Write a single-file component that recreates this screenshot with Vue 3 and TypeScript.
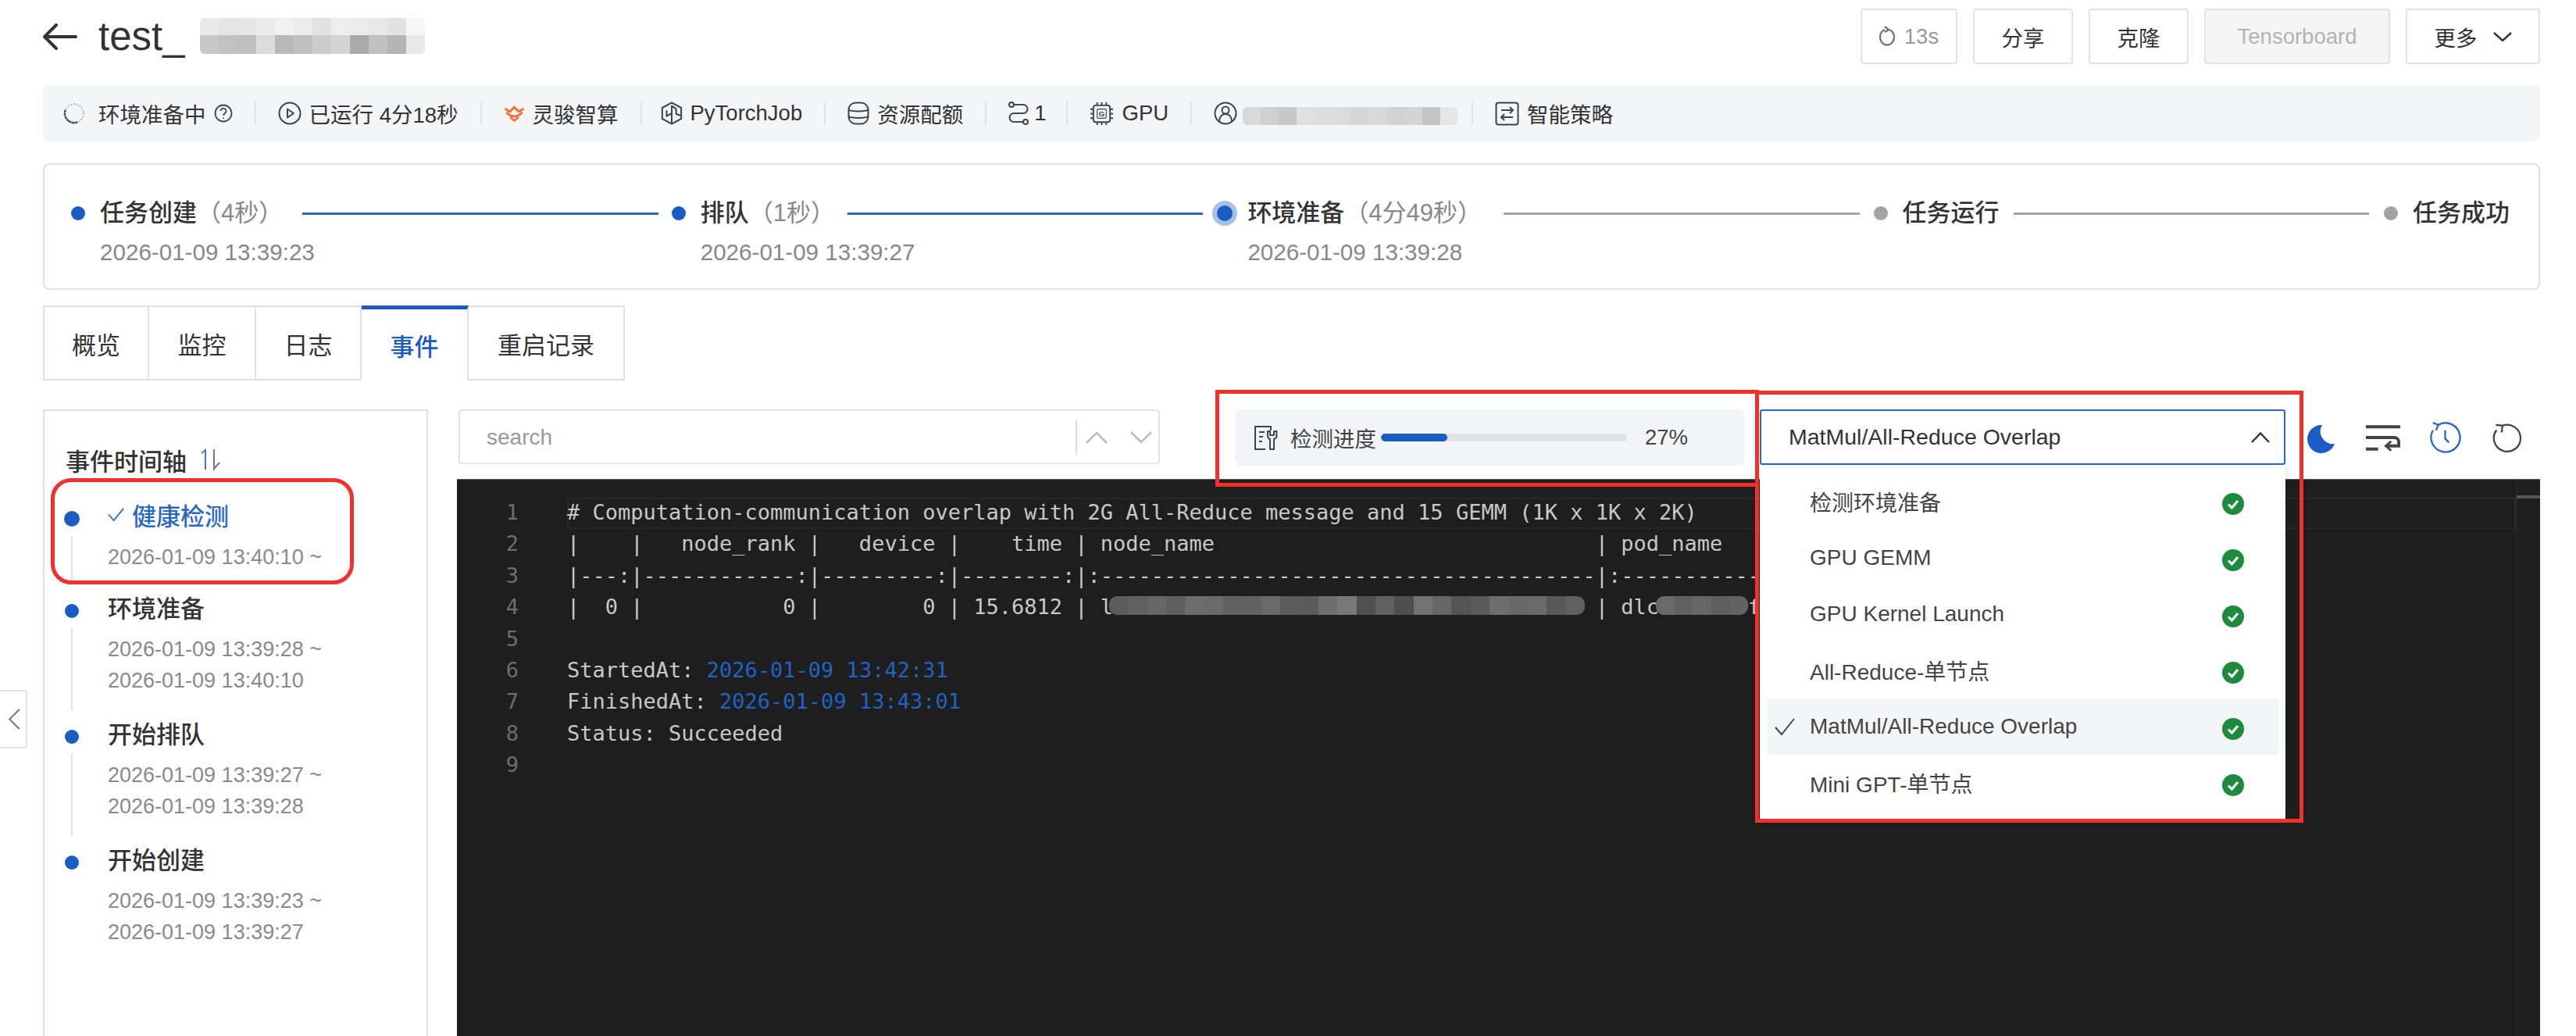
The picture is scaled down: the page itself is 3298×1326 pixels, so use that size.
<script setup lang="ts">
const shade = (v: string) => `#${v}${v}${v}`

const nameBlur = ['e9', 'e4', 'e6', 'eb', 'f0', 'ec', 'e2', 'ee', 'ec', 'e8', 'e2', 'f6', 'c8', 'c2', 'bf', 'dc', 'b9', 'c0', 'cc', 'd4', 'aa', 'c0', 'b4', 'e8'].map(shade)
const ownerBlur = ['d8', 'cf', 'c8', 'e0', 'dd', 'dc', 'd6', 'd8', 'd2', 'd4', 'c4', 'e6'].map(shade)
const nodeBlur = ['5c', '60', '66', '5e', '6c', '6a', '60', '62', '6a', '5c', '5a', '6e', '78', '50', '60', '4e', '72', '66', '54', '5a', '6e', '68', '6a', '58', '60'].map(shade)
const podBlur = ['6a', '60', '66', '5e', '62'].map(shade)

const tabs = [
  { label: '概览', width: 136 },
  { label: '监控', width: 137 },
  { label: '日志', width: 135 },
  { label: '事件', width: 137, active: true },
  { label: '重启记录', width: 200 },
]

const events = [
  { title: '健康检测', dates: ['2026-01-09 13:40:10 ~'], active: true },
  { title: '环境准备', dates: ['2026-01-09 13:39:28 ~', '2026-01-09 13:40:10'] },
  { title: '开始排队', dates: ['2026-01-09 13:39:27 ~', '2026-01-09 13:39:28'] },
  { title: '开始创建', dates: ['2026-01-09 13:39:23 ~', '2026-01-09 13:39:27'] },
]

const options = ['检测环境准备', 'GPU GEMM', 'GPU Kernel Launch', 'All-Reduce-单节点', 'MatMul/All-Reduce Overlap', 'Mini GPT-单节点']

const dash = (n: number) => '-'.repeat(n)
const plainLines = [
  '# Computation-communication overlap with 2G All-Reduce message and 15 GEMM (1K x 1K x 2K)',
  '|    |   node_rank |   device |    time | ' + 'node_name'.padEnd(39) + '| pod_name',
  `|---:|${dash(12)}:|${dash(9)}:|${dash(8)}:|:${dash(39)}|:${dash(11)}`,
  '|  0 |           0 |        0 | 15.6812 | ' + 'l'.padEnd(39) + '| dlc       f',
]
</script>

<template>
  <div class="page">
    <header class="top">
      <svg class="back" viewBox="0 0 44 34" fill="none" stroke="#333" stroke-width="4" stroke-linecap="round" stroke-linejoin="round"><path d="M2 17H42M17 2 2 17l15 15" /></svg>
      <h1 class="job">test_</h1>
      <div class="mosaic name-blur"><i v-for="(c, i) in nameBlur" :key="i" :style="{ background: c }"></i></div>
      <div class="actions">
        <button class="btn muted">
          <svg viewBox="0 0 20 28" width="20" height="28" fill="none" stroke="#777" stroke-width="2.400"><path d="M13 5a9 10 0 1 1-6 0M7 1l5 4-5 3" /></svg>
          13s
        </button>
        <button class="btn w128">分享</button>
        <button class="btn w128">克隆</button>
        <button class="btn disabled">Tensorboard</button>
        <button class="btn more">更多
          <svg viewBox="0 0 24 12" width="24" height="12" fill="none" stroke="#333" stroke-width="2.400"><path d="M1 1l11 10L23 1" /></svg>
        </button>
      </div>
    </header>

    <div class="meta">
      <span class="mi">
        <svg viewBox="0 0 28 30" width="28" height="30" fill="none" stroke-linecap="round"><circle cx="14" cy="15" r="12" stroke="#a9abae" stroke-width="1.800" stroke-dasharray="0.500 3.500" /><path d="M2.500 11.500A12 12 0 0 0 19 26" stroke="#555" stroke-width="2.600" stroke-dasharray="1.500 2.500" /></svg>
        <span class="t8">环境准备中</span>
        <svg viewBox="0 0 24 28" width="24" height="28" fill="none" stroke="#444" stroke-width="1.800"><circle cx="12" cy="14" r="10.500" /><path d="M8.500 11a3.500 3.500 0 1 1 5.500 3c-1.300.9-2 1.500-2 3M12 19.500v1.500" /></svg>
      </span>
      <i class="sep"></i>
      <span class="mi">
        <svg viewBox="0 0 30 30" width="30" height="30" fill="none" stroke="#444" stroke-width="2"><circle cx="15" cy="15" r="13.500" /><path d="M12 9.500 20 15l-8 5.500z" stroke-linejoin="round" /></svg>
        <span>已运行 4分18秒</span>
      </span>
      <i class="sep"></i>
      <span class="mi">
        <svg viewBox="0 0 27 22" width="27" height="22" fill="none" stroke="#f0703a" stroke-width="2.800" stroke-linejoin="round"><path d="M1.500 5 8 9l5.500-6L19 9l6.500-4" /><path d="M3.500 9.500Q6 14 13.500 15 21 14 23.500 9.500" /><path d="M8 16l5.500 4.500L19 16" /></svg>
        <span>灵骏智算</span>
      </span>
      <i class="sep"></i>
      <span class="mi torch">
        <svg viewBox="0 0 30 32" width="28" height="30" fill="none" stroke="#444" stroke-width="2.200" stroke-linejoin="round"><path d="M15 1.500 28 8.500v15L15 30.500 2 23.500v-15zM15 16V6l6 4v7l6 2M15 16l-7 4V12M15 16v14" /></svg>
        <span>PyTorchJob</span>
      </span>
      <i class="sep"></i>
      <span class="mi">
        <svg viewBox="0 0 28 30" width="28" height="30" fill="none" stroke="#444" stroke-width="2"><rect x="1.500" y="1.500" width="25" height="27" rx="9" /><path d="M1.500 10.500c3 2.500 22 2.500 25 0M1.500 19c3 2.500 22 2.500 25 0" /></svg>
        <span>资源配额</span>
      </span>
      <i class="sep"></i>
      <span class="mi tight">
        <svg viewBox="0 0 30 30" width="30" height="30" fill="none" stroke="#444" stroke-width="2"><path d="M9 4h12a5 5 0 0 1 0 11H9a5 5 0 0 0 0 11h12" /><circle cx="6" cy="4" r="3" fill="#f4f5f7" /><circle cx="24" cy="26" r="3" fill="#f4f5f7" /></svg>
        <span>1</span>
      </span>
      <i class="sep"></i>
      <span class="mi chip">
        <svg viewBox="0 0 32 32" width="31" height="31" fill="none" stroke="#444" stroke-width="2"><rect x="5" y="5" width="22" height="22" rx="3" /><rect x="10" y="10" width="12" height="12" rx="1.500" stroke-width="1.200" /><text x="16" y="19.500" text-anchor="middle" font-size="10" font-weight="700" fill="#444" stroke="none" font-family="Liberation Sans">G</text><path d="M10 1v4M16 1v4M22 1v4M10 27v4M16 27v4M22 27v4M1 10h4M1 16h4M1 22h4M27 10h4M27 16h4M27 22h4" /></svg>
        <span>GPU</span>
      </span>
      <i class="sep"></i>
      <span class="mi owner">
        <svg viewBox="0 0 30 30" width="30" height="30" fill="none" stroke="#444" stroke-width="2"><circle cx="15" cy="15" r="13.500" /><circle cx="15" cy="11" r="4.500" /><path d="M7 25c0-5 3-9 8-9s8 4 8 9" /></svg>
        <div class="mosaic owner-blur"><i v-for="(c, i) in ownerBlur" :key="i" :style="{ background: c }"></i></div>
      </span>
      <i class="sep"></i>
      <span class="mi">
        <svg viewBox="0 0 31 31" width="31" height="31" fill="none" stroke="#444" stroke-width="2"><rect x="1.500" y="1.500" width="28" height="28" rx="3" /><path d="M8 11h15M19 7l4 4-4 4M23 20H8M12 16l-4 4 4 4" /></svg>
        <span>智能策略</span>
      </span>
    </div>

    <section class="steps">
      <div class="step done">
        <i class="dot"></i>
        <div class="step-text">
          <div class="step-title">任务创建<span>（4秒）</span></div>
          <div class="step-date">2026-01-09 13:39:23</div>
        </div>
      </div>
      <i class="line blue l1"></i>
      <div class="step done">
        <i class="dot"></i>
        <div class="step-text">
          <div class="step-title">排队<span>（1秒）</span></div>
          <div class="step-date">2026-01-09 13:39:27</div>
        </div>
      </div>
      <i class="line blue l2"></i>
      <div class="step current">
        <i class="dot"></i>
        <div class="step-text">
          <div class="step-title">环境准备<span>（4分49秒）</span></div>
          <div class="step-date">2026-01-09 13:39:28</div>
        </div>
      </div>
      <i class="line l3"></i>
      <div class="step todo">
        <i class="dot"></i>
        <div class="step-text"><div class="step-title">任务运行</div></div>
      </div>
      <i class="line l4"></i>
      <div class="step todo">
        <i class="dot"></i>
        <div class="step-text"><div class="step-title">任务成功</div></div>
      </div>
    </section>

    <nav class="tabs">
      <div v-for="t in tabs" :key="t.label" class="tab" :class="{ active: t.active }" :style="{ width: t.width + 'px' }">{{ t.label }}</div>
    </nav>

    <div class="body">
      <aside class="timeline">
        <div class="tl-head">事件时间轴
          <svg viewBox="0 0 30 30" width="30" height="30" fill="none" stroke-width="2"><path d="M3 7l5-4v25" stroke="#3f78d4" /><path d="M19 2v25l7-8" stroke="#777" /></svg>
        </div>
        <div v-for="(ev, i) in events" :key="ev.title" class="ev" :class="{ first: i === 0 }">
          <div class="ev-rail">
            <i class="ev-dot"></i>
            <i v-if="i < events.length - 1" class="ev-line"></i>
          </div>
          <div class="ev-main">
            <div class="ev-title" :class="{ on: ev.active }">
              <svg v-if="ev.active" viewBox="0 0 22 20" width="21" height="19" fill="none" stroke="#2a68c8" stroke-width="1.800"><path d="M1 10l7 8L21 2" /></svg>
              {{ ev.title }}
            </div>
            <div class="ev-dates"><div v-for="d in ev.dates" :key="d">{{ d }}</div></div>
          </div>
        </div>
      </aside>

      <main class="logs">
        <div class="toolbar">
          <div class="search">
            <span class="ph">search</span>
            <i class="search-sep"></i>
            <svg viewBox="0 0 28 16" width="28" height="16" fill="none" stroke="#bbb" stroke-width="2.500"><path d="M1 15 14 2l13 13" /></svg>
            <svg viewBox="0 0 28 16" width="28" height="16" fill="none" stroke="#bbb" stroke-width="2.500"><path d="M1 1l13 13L27 1" /></svg>
          </div>
          <div class="progress">
            <svg viewBox="0 0 31 33" width="31" height="33" fill="none" stroke="#444" stroke-width="2"><path d="M15 31H2V2h20v5M7 9h7M7 15h5M7 21h4" /><path d="M18 8v6c0 2.500 1.500 3.500 3 4v13h5V18c1.500-.5 3.500-1.500 3.500-4V8l-3.500 0v5h-5V8z" stroke-linejoin="round" /></svg>
            <span class="p-label">检测进度</span>
            <div class="bar"><div class="fill" :style="{ width: '27%' }"></div></div>
            <span class="p-num">27%</span>
          </div>
          <div class="select">
            <span>MatMul/All-Reduce Overlap</span>
            <svg viewBox="0 0 24 14" width="24" height="14" fill="none" stroke="#333" stroke-width="2.400"><path d="M1 13 12 1.500 23 13" /></svg>
            <div class="drop">
              <div v-for="o in options" :key="o" class="opt" :class="{ sel: o === 'MatMul/All-Reduce Overlap' }">
                <svg v-if="o === 'MatMul/All-Reduce Overlap'" class="tick" viewBox="0 0 26 24" width="26" height="24" fill="none" stroke="#444" stroke-width="2"><path d="M1 13l8 9L25 2" /></svg>
                <span>{{ o }}</span>
                <svg class="ok" viewBox="0 0 28 28" width="28" height="28"><circle cx="14" cy="14" r="14" fill="#1e8a3e" /><path d="M8 14.500l4.500 4.500L20 10" fill="none" stroke="#fff" stroke-width="3" /></svg>
              </div>
            </div>
          </div>
          <div class="tools">
            <svg viewBox="0 0 36 36" width="36" height="36"><path d="M20 0A18 18 0 1 0 36 24 16 16 0 0 1 20 0z" fill="#1a5cc4" /></svg>
            <svg viewBox="0 0 46 36" width="45" height="36" fill="none" stroke="#444" stroke-width="4"><path d="M0 3h45M0 17h37a6 6 0 0 1 6 6v5H28M0 32h16" /><path d="M33 22l-7 6 7 6" stroke-width="3" /></svg>
            <svg viewBox="0 0 44 42" width="43" height="41" fill="none" stroke="#2a68c8" stroke-width="2.400"><path d="M13 5a19 19 0 1 1-7 7" /><path d="M6 2l7 3-3 7M22 12v11l5 5" /></svg>
            <svg viewBox="0 0 40 40" width="39" height="38" fill="none" stroke="#444" stroke-width="2.400"><path d="M13 4a18 18 0 1 1-8 6" /><path d="M4 3l9 1-1 9" /></svg>
          </div>
        </div>

        <div class="editor">
          <div class="cur-line"></div>
          <i class="ruler"></i>
          <i class="ruler-mark"></i>
          <div v-for="(l, i) in plainLines" :key="i" class="row">
            <span class="ln">{{ i + 1 }}</span><span class="code">{{ l }}</span>
            <template v-if="i === 3">
              <div class="mosaic node-blur"><i v-for="(c, j) in nodeBlur" :key="j" :style="{ background: c }"></i></div>
              <div class="mosaic pod-blur"><i v-for="(c, j) in podBlur" :key="j" :style="{ background: c }"></i></div>
            </template>
          </div>
          <div class="row"><span class="ln">5</span><span class="code"></span></div>
          <div class="row"><span class="ln">6</span><span class="code">StartedAt: <b>2026-01-09 13:42:31</b></span></div>
          <div class="row"><span class="ln">7</span><span class="code">FinishedAt: <b>2026-01-09 13:43:01</b></span></div>
          <div class="row"><span class="ln">8</span><span class="code">Status: Succeeded</span></div>
          <div class="row"><span class="ln">9</span><span class="code"></span></div>
        </div>
      </main>
    </div>

    <div class="handle">
      <svg viewBox="0 0 16 28" width="16" height="27" fill="none" stroke="#777" stroke-width="2"><path d="M15 1 2 14l13 13" /></svg>
    </div>

    <i class="mark m-event"></i>
    <i class="mark m-progress"></i>
    <i class="mark m-select"></i>
  </div>
</template>

<style>
html, body { margin: 0; background: #fff; }
</style>

<style scoped>
* { box-sizing: border-box; }
.page {
  position: relative;
  width: 3298px;
  height: 1326px;
  overflow: hidden;
  padding: 11px 46px 0 55px;
  display: flex;
  flex-direction: column;
  background: #fff;
  color: #333;
  font-family: "Liberation Sans", "Noto Sans CJK SC", sans-serif;
  font-size: 27.5px;
}
i { display: block; font-style: normal; }
svg { display: block; flex: none; }

.top { display: flex; align-items: center; height: 71px; margin-bottom: 27px; }
.back { width: 44px; height: 34px; }
.job { margin: 0 0 0 27px; font-size: 51px; font-weight: 500; line-height: 60px; color: #333; }
.mosaic { display: grid; overflow: hidden; }
.name-blur {
  width: 288px; height: 46px; margin: 0 0 2px 19px;
  grid-template-columns: repeat(12, 24px);
  grid-template-rows: 22px 24px;
  border-radius: 6px;
}
.actions { margin-left: auto; display: flex; gap: 20px; }
.btn {
  height: 71px;
  border: 2px solid #e2e2e2;
  border-radius: 4px;
  background: #fff;
  font: inherit;
  font-size: 27.5px;
  color: #333;
  display: flex;
  align-items: center;
  justify-content: center;
  gap: 12px;
  padding: 0;
}
.muted { width: 124px; color: #999; }
.w128 { width: 128px; }
.disabled { width: 238px; background: #f5f5f5; color: #b3b3b3; }
.more { width: 172px; gap: 20px; }

.meta {
  height: 72px;
  background: #f4f5f7;
  border-radius: 8px;
  display: flex;
  align-items: center;
  padding-left: 26px;
  gap: 28px;
  margin-bottom: 28px;
  white-space: nowrap;
}
.mi { display: flex; align-items: center; gap: 10px; }
.mi.torch { margin-left: -4px; }
.mi.tight { gap: 5px; margin-left: -2px; margin-right: -3px; }
.mi.chip { gap: 11px; }
.mi.owner { gap: 7px; margin-right: -10px; }
.t8 { margin-left: 7px; }
.sep { width: 2px; height: 30px; background: #e2e3e6; }
.owner-blur {
  width: 275px; height: 23px; margin: 6px 0 0 0;
  grid-template-columns: repeat(12, 23px);
  grid-template-rows: 23px;
  border-radius: 6px;
}

.steps {
  height: 162px;
  border: 2px solid #e0e0e0;
  border-radius: 8px;
  display: flex;
  align-items: flex-start;
  padding: 40px 37px 0 34px;
  margin-bottom: 20px;
}
.step { display: flex; align-items: flex-start; white-space: nowrap; }
.dot { width: 18px; height: 18px; border-radius: 50%; margin: 13px 19px 0 0; }
.done .dot { background: #1a5cc4; }
.todo .dot { background: #a3a3a3; }
.current .dot {
  width: 32px; height: 32px; margin: 6px 13px 0 0;
  background: #1a5cc4;
  border: 6px solid #a5c1ec;
}
.step-title { font-size: 31px; line-height: 44px; font-weight: 500; color: #333; }
.step-title span { font-weight: 400; color: #888; }
.step-date { width: 0; margin-top: 8px; font-size: 29.600px; line-height: 40px; color: #888; }
.line { flex: 1; height: 3px; margin-top: 21px; background: #a3a3a3; }
.line.blue { background: #2a68c8; }
.l1 { margin-left: 25px; margin-right: 17px; }
.l2 { margin-left: 16px; margin-right: 12px; }
.l3 { margin-left: 28px; margin-right: 18px; }
.l4 { margin-left: 18px; margin-right: 19px; }

.tabs { display: flex; height: 96px; margin-bottom: 37px; }
.tab {
  height: 96px;
  border: 2px solid #e0e0e0;
  border-left-width: 0;
  display: flex;
  align-items: center;
  justify-content: center;
  font-size: 31px;
  color: #333;
}
.tab:first-child { border-left-width: 2px; }
.tab.active {
  border-bottom: 0;
  border-top: 5px solid #1a5cc4;
  color: #1a5cc4;
  font-weight: 500;
}

.body { flex: 1; display: flex; gap: 37px; min-height: 0; }
.timeline {
  width: 493px;
  flex: none;
  border: 2px solid #e0e0e0;
  border-bottom: 0;
  padding-top: 40px;
}
.tl-head {
  display: flex;
  align-items: center;
  gap: 16px;
  height: 44px;
  margin: 0 0 26px 27px;
  font-size: 31px;
  font-weight: 500;
}
.ev { display: flex; }
.ev-rail { width: 70px; display: flex; flex-direction: column; align-items: center; padding-top: 19px; }
.ev-dot { width: 18px; height: 18px; border-radius: 50%; background: #1a5cc4; flex: none; }
.first .ev-dot { width: 20px; height: 20px; margin-top: -1px; }
.ev-line { flex: 1; width: 2px; margin: 13px 0 6px; background: #e2e2e2; }
.ev-main { margin-left: 11px; padding-bottom: 24px; }
.first .ev-main { padding-bottom: 21px; }
.ev-title { height: 44px; display: flex; align-items: center; gap: 10px; font-size: 31px; font-weight: 500; color: #333; }
.ev-title.on { color: #2a68c8; }
.ev-dates { margin-top: 13px; font-size: 27px; line-height: 40px; color: #8a8a8a; white-space: nowrap; }

.logs { flex: 1; min-width: 0; display: flex; flex-direction: column; }
.toolbar { display: flex; align-items: flex-start; height: 71px; margin-bottom: 18px; position: relative; z-index: 2; }
.search {
  width: 898px; height: 70px; margin-left: 2px;
  border: 2px solid #e4e4e4;
  border-radius: 4px;
  display: flex;
  align-items: center;
  padding: 2px 0 0 34px;
}
.ph { flex: 1; font-size: 28px; color: #999; }
.search-sep { width: 2px; height: 44px; background: #ddd; margin-right: 11px; }
.search svg:last-child { margin: 0 8px 0 29px; }
.progress {
  width: 653px; height: 72px; margin-left: 96px;
  background: #f3f4f6;
  border-radius: 8px;
  display: flex;
  align-items: center;
  padding-left: 24px;
}
.p-label { margin-left: 16px; font-size: 27.500px; color: #444; white-space: nowrap; }
.bar { width: 315px; height: 10px; margin-left: 6px; border-radius: 5px; background: #e2e2e2; overflow: hidden; }
.fill { height: 100%; border-radius: 5px; background: #1a5cc4; }
.p-num { margin-left: 23px; font-size: 27.500px; color: #444; }
.select {
  position: relative;
  width: 673px; height: 71px; margin-left: 19px;
  border: 2px solid #2a68c8;
  border-radius: 3px;
  background: #fff;
  display: flex;
  align-items: center;
  justify-content: space-between;
  padding: 0 18px 0 35px;
  font-size: 28.500px;
  color: #333;
}
.drop {
  position: absolute;
  left: -2px;
  top: 69px;
  width: 673px;
  height: 454px;
  padding: 11px 9px;
  background: #fff;
  border-radius: 0 0 3px 3px;
  box-shadow: 0 2px 8px rgba(0, 0, 0, 0.18);
  z-index: 5;
}
.opt {
  position: relative;
  height: 72px;
  display: flex;
  align-items: center;
  justify-content: space-between;
  padding: 0 44px 0 55px;
  font-size: 28px;
  color: #444;
  white-space: nowrap;
  border-radius: 4px;
}
.opt.sel { background: #f4f5f7; }
.tick { position: absolute; left: 10px; top: 24px; }
.ok { margin-top: 6px; }
.tools { display: flex; align-items: center; height: 71px; margin-left: 27px; }
.tools svg:nth-child(1) { margin-top: 4px; }
.tools svg:nth-child(2) { margin-left: 40px; margin-top: 2px; }
.tools svg:nth-child(3) { margin-left: 35px; }
.tools svg:nth-child(4) { margin-left: 39px; }

.editor {
  position: relative;
  flex: 1;
  background: #1e1e1e;
  padding-top: 22px;
  overflow: hidden;
  border-top: 1px solid #555;
  font-family: "DejaVu Sans Mono", monospace;
  font-size: 27px;
  color: #c8c8c8;
}
.cur-line {
  position: absolute;
  left: 141px; top: 23px; width: 2495px; height: 40px;
  border: 2px solid #282828;
  pointer-events: none;
}
.ruler { position: absolute; left: 2636px; top: 0; bottom: 0; width: 2px; background: #282828; }
.ruler-mark { position: absolute; left: 2637px; top: 20px; width: 30px; height: 4px; background: #555; }
.row { position: relative; height: 40.400px; line-height: 40.400px; display: flex; white-space: pre; }
.ln { width: 79px; flex: none; text-align: right; color: #6e6e6e; }
.code { margin-left: 62px; }
.code b { font-weight: 400; color: #1f63c4; }
.node-blur, .pod-blur {
  position: absolute;
  top: 6px;
  height: 24px;
  border-radius: 10px;
  grid-template-rows: 24px;
}
.node-blur { left: 835px; width: 609px; grid-template-columns: repeat(25, 24.360px); }
.pod-blur { left: 1535px; width: 118px; grid-template-columns: repeat(5, 23.600px); }

.handle {
  position: absolute;
  left: -4px; top: 883px;
  width: 39px; height: 75px;
  border: 2px solid #e4e4e4;
  border-radius: 4px;
  background: #fff;
  display: flex;
  align-items: center;
  padding-left: 12px;
}

.mark { position: absolute; border: 5px solid #f5302a; pointer-events: none; z-index: 10; }
.m-event { left: 65px; top: 612px; width: 388px; height: 136px; border-radius: 26px; }
.m-progress { left: 1556px; top: 499px; width: 696px; height: 124px; }
.m-select { left: 2247px; top: 500px; width: 702px; height: 553px; }
</style>
